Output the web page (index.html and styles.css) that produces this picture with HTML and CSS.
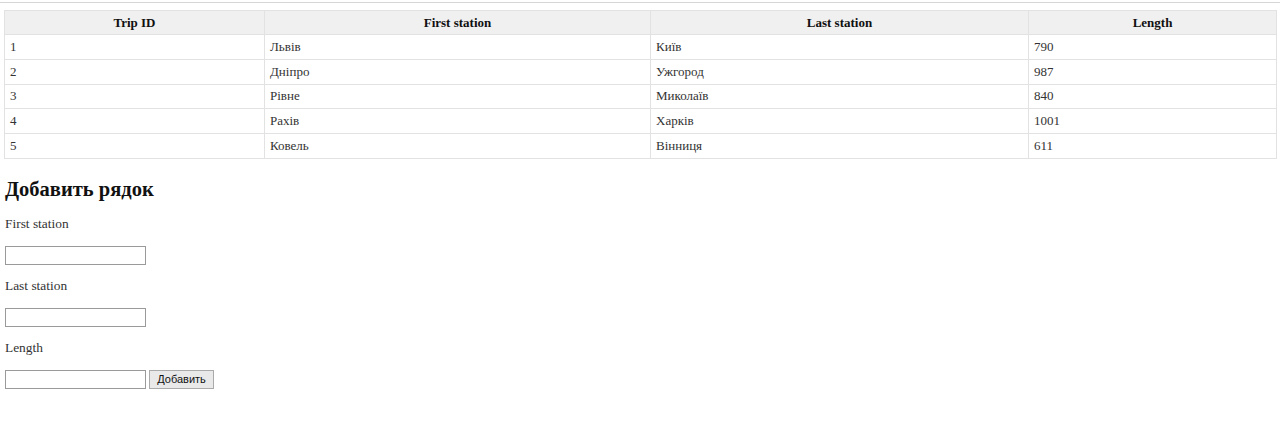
FILE: index.html
```html
<!DOCTYPE html>
<html>
<head>
<meta charset="utf-8">
<link rel="stylesheet" href="styles.css">
</head>
<body>
<div class="topline"></div>
<div class="page">
<table class="trips">
<colgroup><col class="c1"><col class="c2"><col class="c3"><col class="c4"></colgroup>
<thead>
<tr><th>Trip ID</th><th>First station</th><th>Last station</th><th>Length</th></tr>
</thead>
<tbody>
<tr><td>1</td><td>Львів</td><td>Київ</td><td>790</td></tr>
<tr><td>2</td><td>Дніпро</td><td>Ужгород</td><td>987</td></tr>
<tr><td>3</td><td>Рівне</td><td>Миколаїв</td><td>840</td></tr>
<tr><td>4</td><td>Рахів</td><td>Харків</td><td>1001</td></tr>
<tr><td>5</td><td>Ковель</td><td>Вінниця</td><td>611</td></tr>
</tbody>
</table>
<h2 class="title">Добавить рядок</h2>
<form class="addform">
<p class="label">First station</p>
<input class="field" type="text">
<p class="label">Last station</p>
<input class="field" type="text">
<p class="label">Length</p>
<div class="lastrow"><input class="field" type="text"><button class="btn" type="button">Добавить</button></div>
</form>
</div>
</body>
</html>
```
FILE: styles.css
```css
html, body { margin: 0; padding: 0; background: #fff; }
body { font-family: "Liberation Serif", "Times New Roman", serif; font-size: 13px; color: #222; }
.topline { height: 2px; border-bottom: 1px solid #d6d6d6; }
.page { padding: 7px 4px 0 4px; }
.trips { width: 1272px; border-collapse: collapse; table-layout: fixed; }
.c1 { width: 260px; } .c2 { width: 386px; } .c3 { width: 378px; } .c4 { width: 248px; }
.trips th, .trips td { border: 1px solid #e2e2e2; padding: 0 5px; text-align: left; font-size: 13px; }
.trips th { background: #f0f0f0; text-align: center; font-weight: bold; color: #111; height: 23px; }
.trips td { height: 23.75px; color: #333; }
.title { font-size: 20.5px; font-weight: bold; margin: 19px 0 0 1px; line-height: 22px; color: #111; }
.addform { margin-left: 1px; }
.label { margin: 13px 0 0 0; line-height: 16px; color: #333; font-size: 13.4px; }
.addform .label:first-child { margin-top: 16px; }
.field { display: block; margin: 14px 0 0 0; width: 141px; height: 19px; box-sizing: border-box; border: 1px solid #9a9a9a; padding: 0; background: #fff; }
.lastrow { display: flex; align-items: center; gap: 3px; margin-top: 14px; }
.lastrow .field { margin: 0; }
.btn { font-family: "Liberation Sans", Arial, sans-serif; font-size: 11px; height: 19px; padding: 0 6px; box-sizing: border-box; border: 1px solid #aaa; background: #e9e9e9; color: #111; border-radius: 0; width: 65px; }
```
